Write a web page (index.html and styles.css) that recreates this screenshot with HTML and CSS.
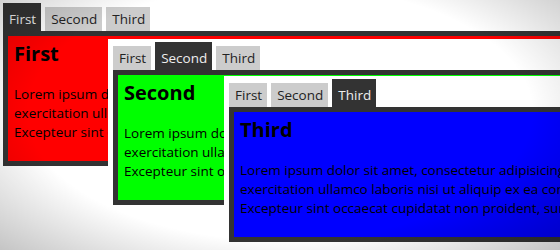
FILE: index.html
```html
<!DOCTYPE html>
<html lang="en">
<head>
    <meta charset="UTF-8">
    <meta name="viewport" content="width=device-width, initial-scale=1.0">
    <title>Tabs</title>
    <link rel="stylesheet" href="styles.css">
</head>
<body>
    <div class="stage">
        <!-- Первый блок вкладок -->
        <div class="tabset tabset-one">
            <ul class="tabs">
                <li class="tab active">First</li>
                <li class="tab">Second</li>
                <li class="tab">Third</li>
            </ul>
            <div class="panel panel-red">
                <h2>First</h2>
                <p>Lorem ipsum dolor sit amet, consectetur adipisicing elit, sed do eiusmod tempor incididunt ut labore et dolore magna aliqua.<br>
                exercitation ullamco laboris nisi ut aliquip ex ea commodo consequat.<br>
                Excepteur sint occaecat cupidatat non proident, sunt in culpa qui officia deserunt mollit anim id est laborum.</p>
            </div>
        </div>

        <!-- Второй блок вкладок -->
        <div class="tabset tabset-two">
            <ul class="tabs">
                <li class="tab">First</li>
                <li class="tab active">Second</li>
                <li class="tab">Third</li>
            </ul>
            <div class="panel panel-green">
                <h2>Second</h2>
                <p>Lorem ipsum dolor sit amet, consectetur adipisicing elit, sed do eiusmod tempor incididunt ut labore et dolore magna aliqua.<br>
                exercitation ullamco laboris nisi ut aliquip ex ea commodo consequat.<br>
                Excepteur sint occaecat cupidatat non proident, sunt in culpa qui officia deserunt mollit anim id est laborum.</p>
            </div>
        </div>

        <!-- Третий блок вкладок -->
        <div class="tabset tabset-three">
            <ul class="tabs">
                <li class="tab">First</li>
                <li class="tab">Second</li>
                <li class="tab active">Third</li>
            </ul>
            <div class="panel panel-blue">
                <h2>Third</h2>
                <p>Lorem ipsum dolor sit amet, consectetur adipisicing elit, sed do eiusmod tempor incididunt ut labore et dolore magna aliqua.<br>
                exercitation ullamco laboris nisi ut aliquip ex ea commodo consequat.<br>
                Excepteur sint occaecat cupidatat non proident, sunt in culpa qui officia deserunt mollit anim id est laborum.</p>
            </div>
        </div>
    </div>
</body>
</html>
```

FILE: styles.css
```css
* {
    margin: 0;
    padding: 0;
    box-sizing: border-box;
    font-family: 'Open Sans', 'DejaVu Sans', sans-serif;
}

body {
    background-color: #ffffff;
    width: 560px;
    height: 250px;
    overflow: hidden;
}

.stage {
    position: relative;
    width: 560px;
    height: 250px;
    overflow: hidden;
}

/* Затемнение по краям */
.stage::after {
    content: "";
    position: absolute;
    top: 0;
    left: 0;
    right: 0;
    bottom: 0;
    pointer-events: none;
    background: radial-gradient(ellipse 75% 85% at 50% 45%, rgba(0, 0, 0, 0) 60%, rgba(0, 0, 0, 0.28) 100%);
    z-index: 10;
}

.tabset {
    position: absolute;
    width: 800px;
    padding: 3px 5px;
    background-color: #ffffff;
}

.tabset-one {
    top: 0;
    left: -2px;
    z-index: 1;
}

.tabset-two {
    top: 39px;
    left: 108px;
    z-index: 2;
}

.tabset-three {
    top: 76px;
    left: 224px;
    z-index: 3;
}

.tabs {
    list-style: none;
    display: flex;
    align-items: flex-end;
    gap: 4px;
    height: 28px;
}

.tab {
    font-size: 13.5px;
    line-height: 20px;
    padding: 2px 5px 2px 6px;
    background-color: #cccccc;
    color: #222222;
    cursor: pointer;
}

.tab.active {
    padding-top: 6px;
    background-color: #333333;
    color: #eeeeee;
}

.panel {
    height: 135px;
    border: 5px solid #333333;
    padding: 4px 6px;
    overflow: hidden;
    color: #000000;
}

.panel h2 {
    font-size: 20px;
    line-height: 27px;
    font-weight: bold;
}

.panel p {
    margin-top: 18px;
    font-size: 13.5px;
    line-height: 19px;
    white-space: nowrap;
}

.panel-red {
    background-color: #ff0000;
}

.panel-green {
    background-color: #00ff00;
}

.panel-blue {
    background-color: #0000ff;
}
```
